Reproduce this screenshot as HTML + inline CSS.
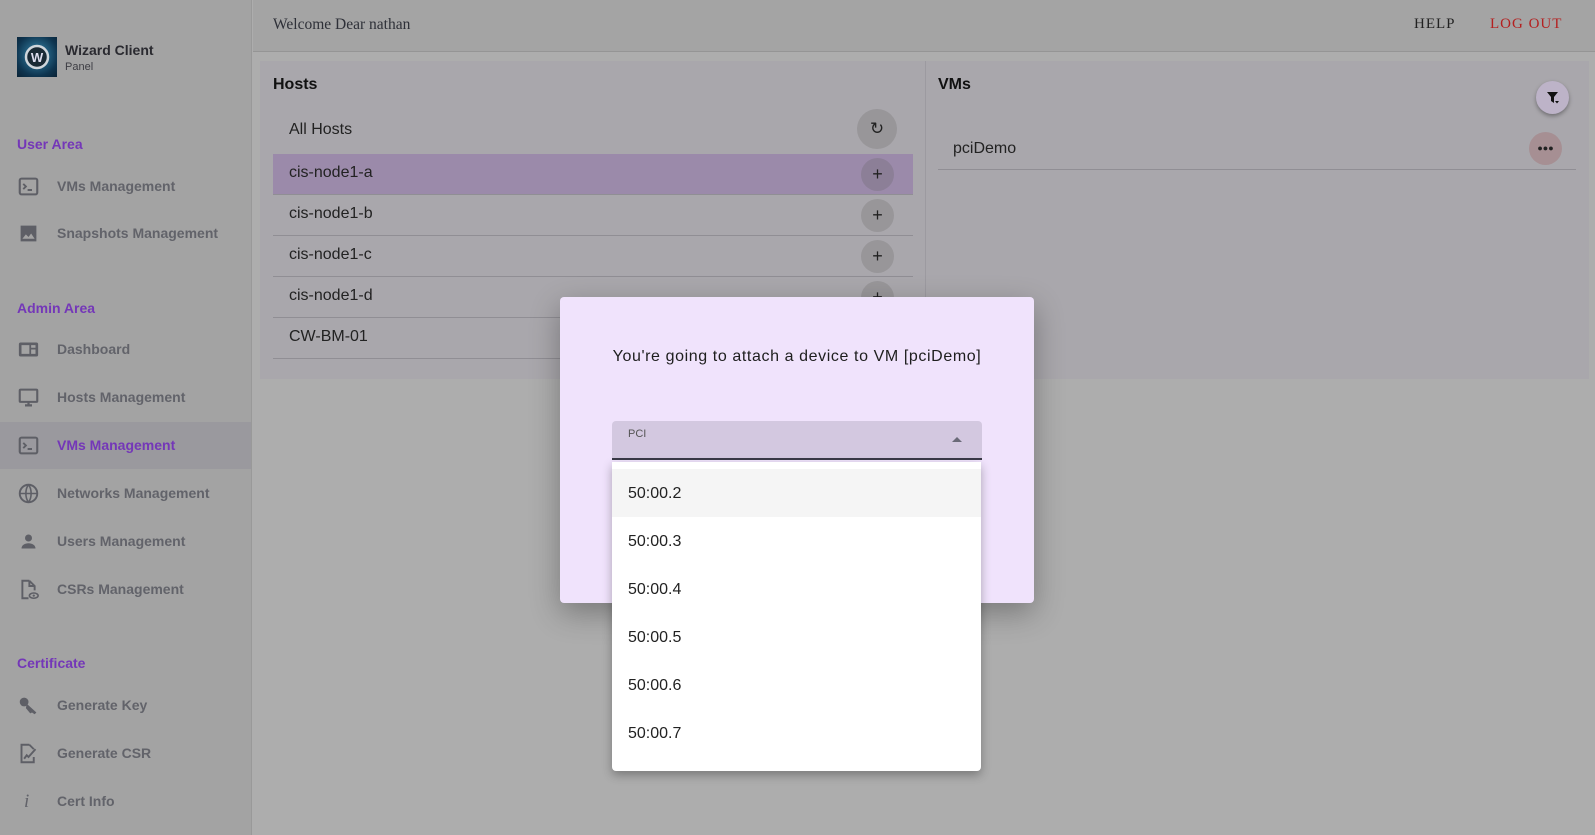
<!DOCTYPE html>
<html><head><meta charset="utf-8"><style>
*{box-sizing:border-box;margin:0;padding:0}
body{width:1595px;height:835px;overflow:hidden;background:#adadad;font-family:"Liberation Sans",sans-serif;position:relative}
.abs{position:absolute}
#side{left:0;top:0;width:252px;height:835px;background:#a3a3a3;border-right:1px solid #999}
.sec{position:absolute;left:17px;color:#7437b8;font-size:14px;font-weight:bold}
.it{position:absolute;left:0;width:251px;height:47px;line-height:47px;font-size:14px;color:#62636a;font-weight:bold}
.it span{position:absolute;left:57px}
.it svg{position:absolute;left:18px;top:13px}
#hdr{left:253px;top:0;right:0;height:52px;background:#a4a4a4;border-bottom:1px solid #959595;font-family:"Liberation Serif",serif}
.panel{background:#a9a7ac}
.row{position:absolute;left:273px;width:640px;height:41px;border-bottom:1px solid #908e94;font-size:16px;color:#222}
.row span{position:absolute;left:16px;top:10px}
.btn{position:absolute;width:33px;height:33px;border-radius:50%;background:#989699;text-align:center;line-height:33px;font-size:18px;color:#222}
.opt{position:absolute;left:628px;font-size:16px;color:#222;line-height:1}
</style></head><body>
<div id="side" class="abs">
  <div class="abs" style="left:17px;top:37px;width:40px;height:40px;background:radial-gradient(circle at 50% 45%,#3a8bb0,#0e3550 70%,#0a2235)"><svg width="40" height="40"><circle cx="20" cy="20" r="11" fill="#1a2a35" stroke="#cfd6dc" stroke-width="2.5"/><text x="20" y="25" text-anchor="middle" font-size="13" font-weight="bold" fill="#dde" font-family="Liberation Sans">W</text></svg></div>
  <div class="abs" style="left:65px;top:42px;font-size:14px;color:#2a2a30;font-weight:bold">Wizard Client</div>
  <div class="abs" style="left:65px;top:61px;font-size:11px;color:#3e3e44">Panel</div>
  <div class="sec" style="top:136px">User Area</div>
  <div class="it" style="top:163px"><svg width="21" height="21" viewBox="0 0 24 24"><rect x="2" y="3" width="20" height="18" rx="2" fill="none" stroke="#5e5f66" stroke-width="2.4"/><path d="M6 9l3 3-3 3M11 16h5" stroke="#5e5f66" stroke-width="2.2" fill="none"/></svg><span>VMs Management</span></div>
  <div class="it" style="top:210px"><svg width="21" height="21" viewBox="0 0 24 24"><path d="M3 3h18v18H3z M5 18l4-5 3 3 3-4 4 6z" fill="#5e5f66" fill-rule="evenodd"/></svg><span>Snapshots Management</span></div>
  <div class="sec" style="top:300px">Admin Area</div>
  <div class="it" style="top:326px"><svg width="21" height="21" viewBox="0 0 24 24"><rect x="1" y="4" width="22" height="16" rx="2" fill="#5e5f66"/><rect x="4" y="7" width="9" height="10" fill="#a3a3a3"/><rect x="15" y="7" width="5" height="3" fill="#a3a3a3"/><rect x="15" y="12" width="5" height="5" fill="#a3a3a3"/></svg><span>Dashboard</span></div>
  <div class="it" style="top:374px"><svg width="21" height="21" viewBox="0 0 24 24"><rect x="2" y="3" width="20" height="14" rx="1" fill="none" stroke="#5e5f66" stroke-width="2.4"/><path d="M8 21h8M12 17v4" stroke="#5e5f66" stroke-width="2.5"/></svg><span>Hosts Management</span></div>
  <div class="it" style="top:422px;background:#9a999e;color:#7437b8"><svg width="21" height="21" viewBox="0 0 24 24"><rect x="2" y="3" width="20" height="18" rx="2" fill="none" stroke="#5e5f66" stroke-width="2.4"/><path d="M6 9l3 3-3 3M11 16h5" stroke="#5e5f66" stroke-width="2.2" fill="none"/></svg><span>VMs Management</span></div>
  <div class="it" style="top:470px"><svg width="21" height="21" viewBox="0 0 24 24"><circle cx="12" cy="12" r="10" fill="none" stroke="#5e5f66" stroke-width="2.2"/><path d="M2 12h20M12 2c-4 5-4 15 0 20M12 2c4 5 4 15 0 20" stroke="#5e5f66" stroke-width="1.8" fill="none"/></svg><span>Networks Management</span></div>
  <div class="it" style="top:518px"><svg width="21" height="21" viewBox="0 0 24 24"><circle cx="12" cy="8" r="4" fill="#5e5f66"/><path d="M4 20c0-4 4-6 8-6s8 2 8 6z" fill="#5e5f66"/></svg><span>Users Management</span></div>
  <div class="it" style="top:566px"><svg width="21" height="21" viewBox="0 0 24 24"><path d="M13 2H5v20h7M13 2l6 6v5M13 2v6h6" fill="none" stroke="#5e5f66" stroke-width="2.2"/><ellipse cx="18" cy="19" rx="5" ry="3" fill="none" stroke="#5e5f66" stroke-width="1.8"/><circle cx="18" cy="19" r="1.3" fill="#5e5f66"/></svg><span>CSRs Management</span></div>
  <div class="sec" style="top:655px">Certificate</div>
  <div class="it" style="top:682px"><svg width="21" height="21" viewBox="0 0 24 24"><circle cx="7" cy="8" r="5" fill="#5e5f66"/><path d="M10 10l11 10-2 2-3-2-2 1-5-6z" fill="#5e5f66"/></svg><span>Generate Key</span></div>
  <div class="it" style="top:730px"><svg width="21" height="21" viewBox="0 0 24 24"><path d="M13 2H4v20h14v-6M13 2l5 5" fill="none" stroke="#5e5f66" stroke-width="2.2"/><path d="M7 18l3-4 2 2 8-9" fill="none" stroke="#5e5f66" stroke-width="2.2"/></svg><span>Generate CSR</span></div>
  <div class="it" style="top:778px"><span style="left:24px;font-family:'Liberation Serif',serif;font-style:italic;font-size:19px;font-weight:normal">i</span><span>Cert Info</span></div>
</div>
<div id="hdr" class="abs">
  <div class="abs" style="left:20px;top:16px;font-size:15.5px;color:#2e3038">Welcome Dear nathan</div>
  <div class="abs" style="left:1161px;top:16px;font-size:15px;color:#222;letter-spacing:1px">HELP</div>
  <div class="abs" style="left:1237px;top:16px;font-size:15px;color:#b42020;letter-spacing:1px">LOG OUT</div>
</div>
<div class="abs panel" style="left:260px;top:61px;width:665px;height:318px"></div>
<div class="abs panel" style="left:926px;top:61px;width:663px;height:318px"></div>
<div class="abs" style="left:925px;top:61px;width:1px;height:318px;background:#9c9aa0"></div>
<div class="abs" style="left:273px;top:76px;font-size:16px;font-weight:bold;color:#111">Hosts</div>
<div class="row" style="top:111px;border:none"><span>All Hosts</span></div>
<div class="btn" style="left:857px;top:109px;width:40px;height:40px;line-height:40px;font-size:17px">&#x21BB;</div>
<div class="row" style="top:154px;background:#9b8aaa"><span>cis-node1-a</span></div>
<div class="row" style="top:195px"><span>cis-node1-b</span></div>
<div class="row" style="top:236px"><span>cis-node1-c</span></div>
<div class="row" style="top:277px"><span>cis-node1-d</span></div>
<div class="row" style="top:318px"><span>CW-BM-01</span></div>
<div class="btn" style="left:861px;top:158px;background:#8c7f97">+</div>
<div class="btn" style="left:861px;top:199px">+</div>
<div class="btn" style="left:861px;top:240px">+</div>
<div class="btn" style="left:861px;top:281px">+</div>
<div class="abs" style="left:938px;top:76px;font-size:16px;font-weight:bold;color:#111">VMs</div>
<div class="btn" style="left:1536px;top:81px;background:#bdb3c8;box-shadow:0 2px 4px rgba(0,0,0,.35)"><svg width="14" height="14" viewBox="0 0 14 14" style="margin-top:10px"><path d="M1 1h11L8 6v6L5 10V6z" fill="#111"/><path d="M9 10h4l-2 2.5z" fill="#111"/></svg></div>
<div class="abs" style="left:953px;top:140px;font-size:16px;color:#222">pciDemo</div>
<div class="abs" style="left:938px;top:169px;width:638px;height:1px;background:#908e94"></div>
<div class="btn" style="left:1529px;top:132px;background:#a68f93;font-size:9px;line-height:32px">&#9679;&#9679;&#9679;</div>
<div class="abs" style="left:560px;top:297px;width:474px;height:306px;background:#f0e3fc;border-radius:4px;box-shadow:0 10px 30px rgba(0,0,0,.3)"></div>
<div class="abs" style="left:560px;top:348px;width:474px;text-align:center;font-size:16px;color:#1e1e1e;letter-spacing:.6px">You're going to attach a device to VM [pciDemo]</div>
<div class="abs" style="left:612px;top:421px;width:370px;height:39px;background:#d3c8e0;border-radius:4px 4px 0 0;border-bottom:2px solid #3a3a48"></div>
<div class="abs" style="left:628px;top:428px;font-size:11px;color:#555">PCI</div>
<div class="abs" style="left:952px;top:437px;width:0;height:0;border-left:5px solid transparent;border-right:5px solid transparent;border-bottom:5px solid #6a6a78"></div>
<div class="abs" style="left:612px;top:462px;width:369px;height:309px;background:#fff;border-radius:0 0 4px 4px;box-shadow:0 4px 10px rgba(0,0,0,.3)"></div>
<div class="abs" style="left:612px;top:469px;width:369px;height:48px;background:#f5f5f5"></div>
<div class="opt" style="top:486px">50:00.2</div>
<div class="opt" style="top:534px">50:00.3</div>
<div class="opt" style="top:582px">50:00.4</div>
<div class="opt" style="top:630px">50:00.5</div>
<div class="opt" style="top:678px">50:00.6</div>
<div class="opt" style="top:726px">50:00.7</div>
</body></html>
